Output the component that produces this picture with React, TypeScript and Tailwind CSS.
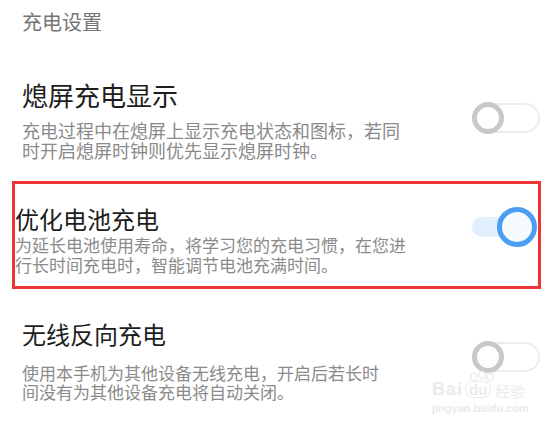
import React from "react";

function OffToggle() {
  return (
    <div className="flex items-center w-[68px] h-[30px] rounded-full border-2 border-[#ececec] bg-white">
      <div className="-ml-[2px] w-[32px] h-[32px] rounded-full border-[5px] border-[#c8c8c8] bg-white" />
    </div>
  );
}

function OnToggle() {
  return (
    <div className="flex items-center w-[65px] h-[40px]">
      <div className="h-[20px] w-[45px] rounded-l-full bg-[#e1eefc]" />
      <div className="-ml-[20px] w-[40px] h-[40px] rounded-full border-[5px] border-[#4b9ef0] bg-[#f5faff]" />
    </div>
  );
}

export default function App() {
  return (
    <div
      className="relative w-[559px] h-[426px] overflow-hidden bg-white"
      style={{ fontFamily: '"Noto Sans CJK SC", "Noto Sans", sans-serif' }}
    >
      <div className="pt-[12px] pl-[22px] text-[20px] leading-none text-[#757575]">
        充电设置
      </div>

      {/* 熄屏充电显示 */}
      <div className="mt-[50px] flex items-start justify-between pl-[22px] pr-[19px]">
        <div>
          <div className="text-[26px] leading-none text-[#1d1d1d]">熄屏充电显示</div>
          <p className="mt-[12px] w-[390px] text-[18px] leading-[20px] text-[#8a8a8a]">
            充电过程中在熄屏上显示充电状态和图标，若同时开启熄屏时钟则优先显示熄屏时钟。
          </p>
        </div>
        <div className="mt-[21px]">
          <OffToggle />
        </div>
      </div>

      {/* 优化电池充电 */}
      <div className="mt-[21px] ml-[12px] w-[529px] border-[3px] border-[#ee3535] pt-[22px] pb-[11px] pr-[1px] flex items-start justify-between">
        <div>
          <div className="text-[24px] leading-[26px] text-[#1d1d1d]">优化电池充电</div>
          <p className="mt-[3px] w-[395px] text-[17px] leading-[20px] text-[#8a8a8a]">
            为延长电池使用寿命，将学习您的充电习惯，在您进行长时间充电时，智能调节电池充满时间。
          </p>
        </div>
        <div className="mt-[1px]">
          <OnToggle />
        </div>
      </div>

      {/* 无线反向充电 */}
      <div className="mt-[33px] flex items-start justify-between pl-[22px] pr-[19px]">
        <div>
          <div className="text-[24px] leading-none text-[#1d1d1d]">无线反向充电</div>
          <p className="mt-[17px] w-[365px] text-[17px] leading-[19px] text-[#8a8a8a]">
            使用本手机为其他设备无线充电，开启后若长时间没有为其他设备充电将自动关闭。
          </p>
        </div>
        <div className="mt-[20px]">
          <OffToggle />
        </div>
      </div>

      {/* watermark */}
      <div className="absolute left-[432px] top-[380px] flex flex-col items-start text-[#ebebeb] pointer-events-none">
        <div className="flex items-end gap-[2px]">
          <span
            className="text-[18px] leading-none font-bold tracking-[1px]"
            style={{ fontFamily: '"Liberation Sans", Arial, sans-serif' }}
          >
            Bai
          </span>
          <div className="relative flex items-end">
            <svg width="36" height="26" viewBox="0 0 36 26" className="absolute -top-[10px] left-0">
              <ellipse cx="9" cy="6" rx="3" ry="4" fill="none" stroke="#ebebeb" strokeWidth="1.5" />
              <ellipse cx="17" cy="4" rx="3" ry="4" fill="none" stroke="#ebebeb" strokeWidth="1.5" />
              <ellipse cx="25" cy="6" rx="3" ry="4" fill="none" stroke="#ebebeb" strokeWidth="1.5" />
            </svg>
            <span
              className="relative px-[3px] text-[15px] leading-none font-bold border-[1.5px] border-[#ebebeb] rounded-[8px]"
              style={{ fontFamily: '"Liberation Sans", Arial, sans-serif' }}
            >
              du
            </span>
          </div>
          <span className="ml-[2px] text-[15px] leading-none">经验</span>
        </div>
        <span
          className="mt-[5px] text-[11px] leading-none font-bold"
          style={{ fontFamily: '"Liberation Sans", Arial, sans-serif' }}
        >
          jingyan.baidu.com
        </span>
      </div>
    </div>
  );
}
